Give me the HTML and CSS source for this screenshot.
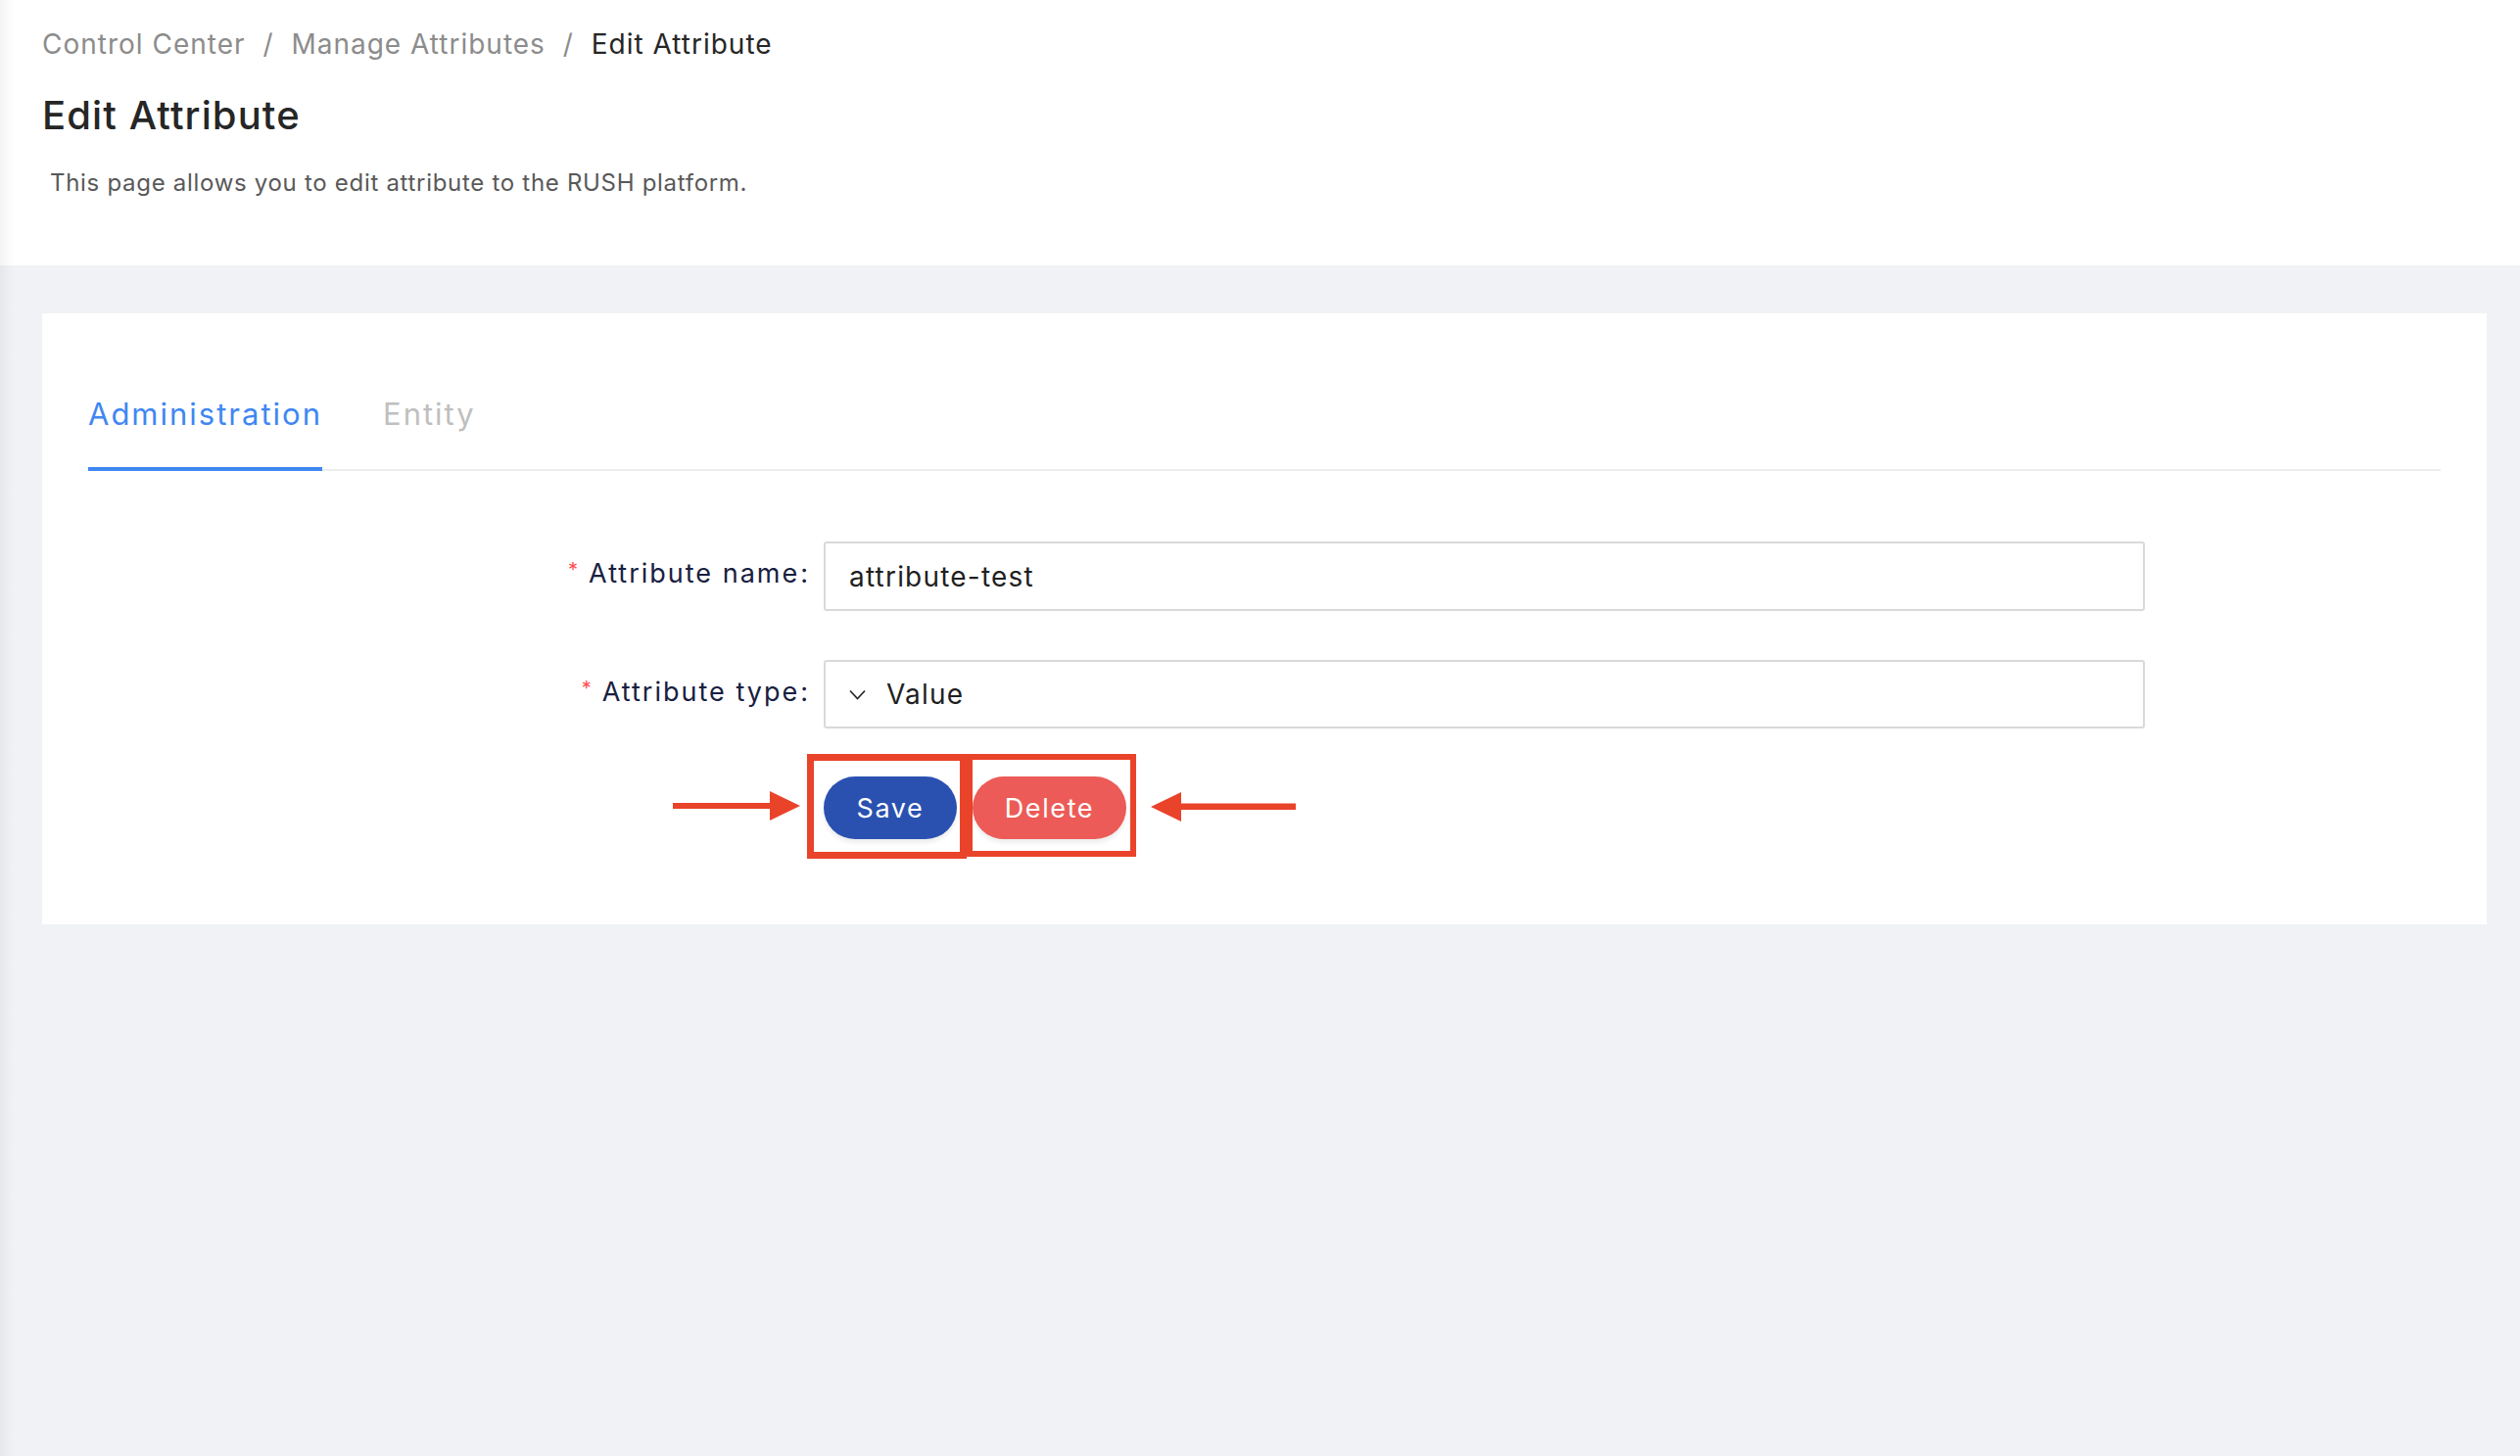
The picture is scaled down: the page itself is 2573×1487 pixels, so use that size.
FILE: index.html
```html
<!DOCTYPE html>
<html lang="en">
<head>
    <meta charset="UTF-8">
    <meta name="viewport" content="width=device-width, initial-scale=1.0">
    <title>Edit Attribute - Control Center</title>
    <link rel="stylesheet" href="styles.css">
</head>
<body>
    <div class="layout">
        <header class="page-header">
            <nav class="breadcrumb">
                <a href="#">Control Center</a>
                <span class="sep">/</span>
                <a href="#">Manage Attributes</a>
                <span class="sep">/</span>
                <span class="current">Edit Attribute</span>
            </nav>
            <h1>Edit Attribute</h1>
            <p class="description">This page allows you to edit attribute to the RUSH platform.</p>
        </header>

        <main class="content">
            <div class="card">
                <div class="tabs">
                    <div class="tab active">Administration</div>
                    <div class="tab">Entity</div>
                </div>

                <form class="attr-form" onsubmit="return false;">
                    <label class="form-label" for="attr_name"><span class="req">*</span>Attribute name<span class="colon">:</span></label>
                    <div class="form-control">
                        <input type="text" id="attr_name" class="text-input" value="attribute-test">
                    </div>

                    <label class="form-label" for="attr_type"><span class="req">*</span>Attribute type<span class="colon">:</span></label>
                    <div class="form-control">
                        <div class="select" id="attr_type">
                            <svg class="chevron" width="17" height="11" viewBox="0 0 17 11">
                                <path d="M1 1.5 L8.5 9.5 L16 1.5" fill="none" stroke="#262626" stroke-width="1.7"/>
                            </svg>
                            <span>Value</span>
                        </div>
                    </div>

                    <div class="form-actions">
                        <button type="submit" class="btn btn-save">Save</button>
                        <button type="button" class="btn btn-delete">Delete</button>

                        <!-- screenshot annotations -->
                        <div class="mark mark-save"></div>
                        <div class="mark mark-delete"></div>
                        <svg class="arrow arrow-left" width="130" height="30" viewBox="0 0 130 30">
                            <rect x="0" y="12" width="100" height="6" fill="#e9432a"/>
                            <polygon points="99,0 130,15 99,30" fill="#e9432a"/>
                        </svg>
                        <svg class="arrow arrow-right" width="148" height="30" viewBox="0 0 148 30">
                            <polygon points="0,15 31,0 31,30" fill="#e9432a"/>
                            <rect x="30" y="11.5" width="118" height="6.5" fill="#e9432a"/>
                        </svg>
                    </div>
                </form>
            </div>
        </main>
    </div>
</body>
</html>
```

FILE: styles.css
```css
* {
    margin: 0;
    padding: 0;
    box-sizing: border-box;
}

body {
    font-family: 'Inter', 'Open Sans', sans-serif;
    background: #f0f2f5;
    min-height: 100vh;
}

.layout {
    position: relative;
    min-height: 100vh;
}

.layout::before {
    content: '';
    position: absolute;
    left: 0;
    top: 0;
    bottom: 0;
    width: 14px;
    background: linear-gradient(to right, rgba(0, 0, 0, 0.045), rgba(0, 0, 0, 0));
    pointer-events: none;
    z-index: 1;
}

/* header */

.page-header {
    background: #fff;
    height: 271px;
    padding: 25px 0 0 43px;
}

.breadcrumb {
    font-size: 28px;
    line-height: 40px;
    letter-spacing: 1px;
    color: #8c8c8c;
}

.breadcrumb a {
    color: #8c8c8c;
    text-decoration: none;
}

.breadcrumb .sep {
    margin: 0 9px;
    color: #8c8c8c;
}

.breadcrumb .current {
    color: #262626;
}

.page-header h1 {
    margin-top: 25px;
    font-size: 40px;
    line-height: 56px;
    font-weight: 500;
    letter-spacing: 1.1px;
    color: #262626;
}

.description {
    margin-top: 24px;
    margin-left: 8px;
    font-size: 24px;
    line-height: 34px;
    letter-spacing: 0.7px;
    color: #595959;
}

/* content */

.content {
    padding: 49px 34px 0 43px;
}

.card {
    background: #fff;
    padding: 81px 47px 87px;
}

.tabs {
    display: flex;
    gap: 62px;
    border-bottom: 2px solid #ededed;
}

.tab {
    font-size: 31px;
    line-height: 44px;
    letter-spacing: 2px;
    padding-bottom: 32px;
    border-bottom: 4px solid transparent;
    margin-bottom: -2px;
    color: #bfbfbf;
}

.tab.active {
    color: #3f87f2;
    border-bottom-color: #3f87f2;
}

/* form */

.attr-form {
    margin-top: 72px;
    display: grid;
    grid-template-columns: 751px 1349px;
    row-gap: 50px;
    align-items: center;
}

.form-label {
    text-align: right;
    padding-right: 14px;
    padding-bottom: 6px;
    font-size: 27px;
    letter-spacing: 2px;
    color: #18203f;
}

.form-label .req {
    color: #ff4d4f;
    font-size: 20px;
    letter-spacing: 0;
    vertical-align: 6px;
    margin-right: 11px;
}

.form-label .colon {
    margin-left: 1px;
}

.text-input,
.select {
    width: 100%;
    height: 71px;
    border: 2px solid #d9d9d9;
    border-radius: 3px;
    padding: 0 24px;
    font-family: inherit;
    font-size: 28px;
    letter-spacing: 1.2px;
    color: #1f1f1f;
    background: #fff;
    outline: none;
}

.select {
    height: 70px;
    display: flex;
    align-items: center;
    gap: 21px;
}

.form-actions {
    grid-column: 2;
    position: relative;
    display: flex;
    gap: 16px;
    margin-top: -1px;
}

.btn {
    height: 64px;
    border: none;
    border-radius: 32px;
    font-family: inherit;
    font-size: 27px;
    letter-spacing: 1.6px;
    color: #fff;
    cursor: pointer;
    box-shadow: 0 4px 4px rgba(0, 0, 0, 0.07);
}

.btn-save {
    width: 136px;
    background: #2a51b0;
}

.btn-delete {
    width: 157px;
    background: #ec5b57;
}

/* annotation overlay */

.mark {
    position: absolute;
    top: -23px;
    border: 7px solid #e9432a;
}

.mark-save {
    left: -17px;
    width: 163px;
    height: 107px;
}

.mark-delete {
    left: 146px;
    width: 173px;
    height: 105px;
    border-width: 6px;
}

.arrow {
    position: absolute;
    top: 15px;
}

.arrow-left {
    left: -154px;
}

.arrow-right {
    left: 334px;
    top: 16px;
}
```
